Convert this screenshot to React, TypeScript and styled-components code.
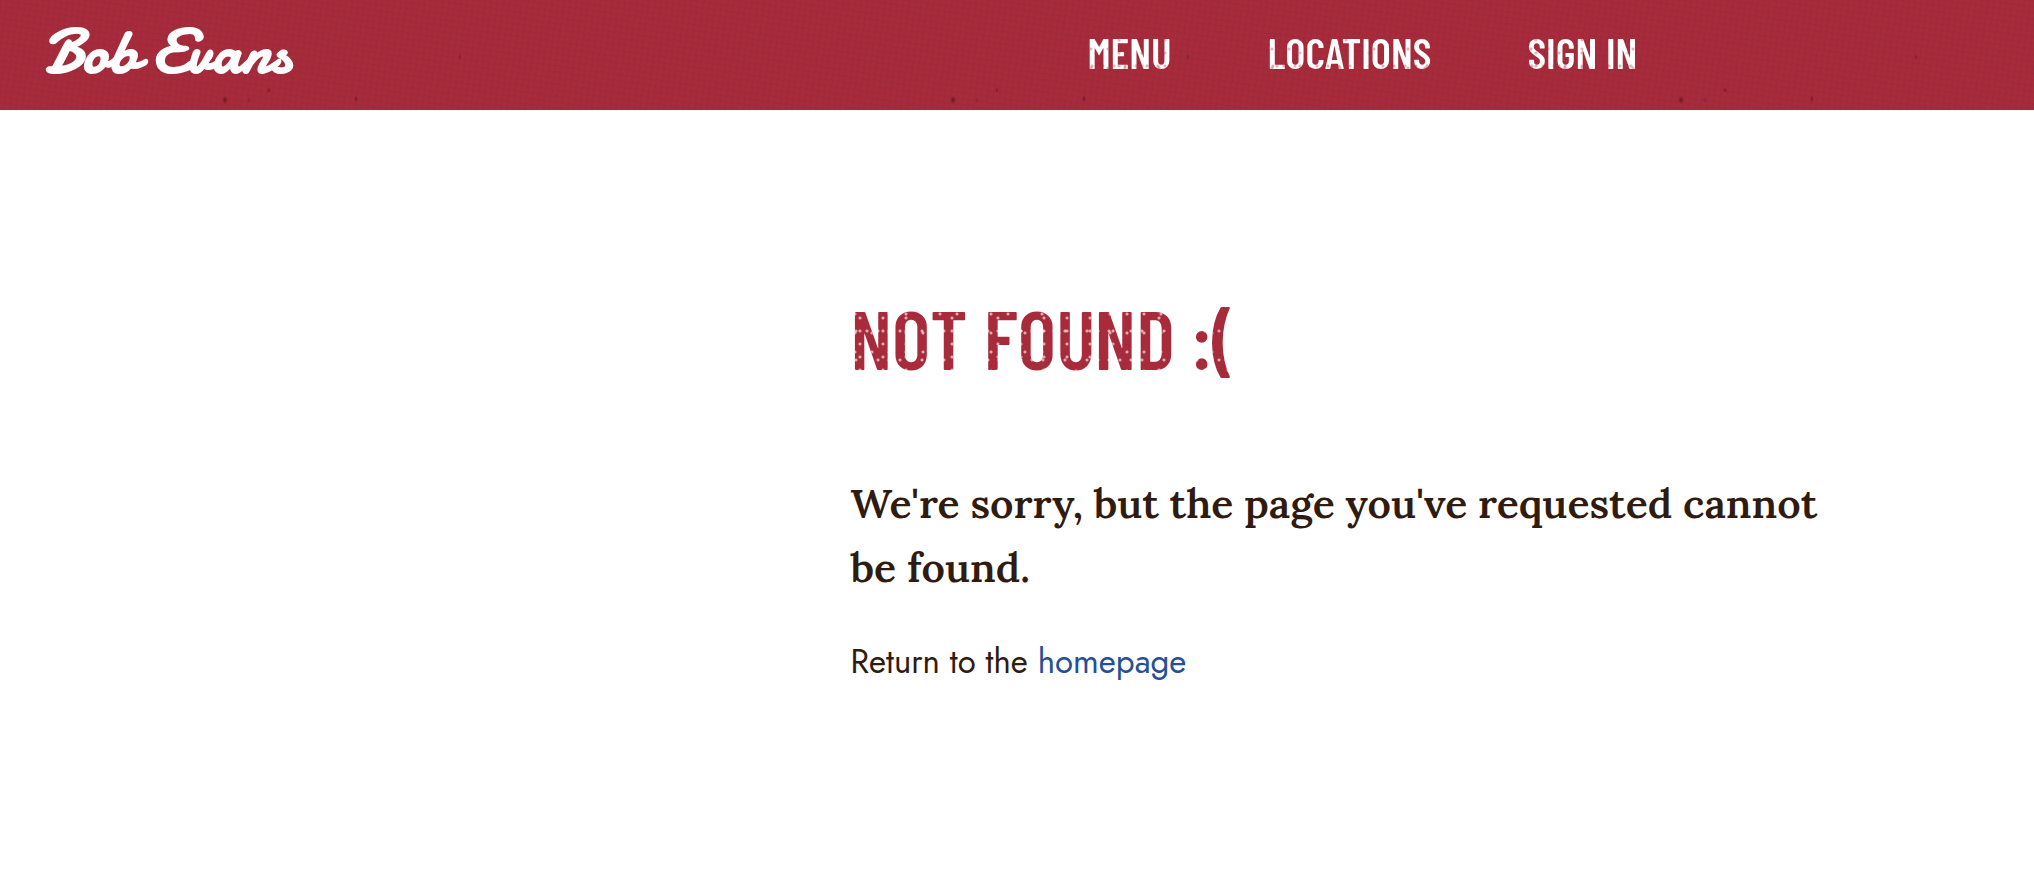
import React from 'react';
import styled, { createGlobalStyle, css } from 'styled-components';

const colors = {
  red: '#a82b3b',
  brown: '#2f1b10',
  blue: '#264f95',
  white: '#ffffff',
};

const fonts = {
  stamp: '"Barlow Condensed", "Open Sans Condensed", "Roboto Condensed", sans-serif',
  script: 'Damion, "Kaushan Script", Lato, cursive',
  serif: 'Lora, "Noto Serif", "Liberation Serif", serif',
  sans: 'Jost, Lato, sans-serif',
};

const GlobalStyle = createGlobalStyle`
  *, *::before, *::after { box-sizing: border-box; }
  body { margin: 0; background: ${colors.white}; color: ${colors.brown}; }
`;

/* Worn ink: specks in tiles of unequal size, so that the pattern does not visibly repeat. */
const wornInk = css<{ $ink: string; $speck: string }>`
  color: transparent;
  background-color: ${p => p.$ink};
  background-image:
    radial-gradient(circle at 4px 6px, ${p => p.$speck} 1px, transparent 2px),
    radial-gradient(circle at 9px 3px, ${p => p.$speck} 1px, transparent 2px),
    radial-gradient(circle at 5px 13px, ${p => p.$speck} 1px, transparent 2px);
  background-size: 17px 19px, 23px 13px, 11px 29px;
  -webkit-background-clip: text;
  background-clip: text;
`;

const Header = styled.header`
  display: flex;
  align-items: center;
  justify-content: space-between;
  min-height: 110px;
  padding: 0 19.5% 6px 44px;
  background-color: ${colors.red};
  background-image:
    radial-gradient(ellipse 3px 4px at 225px 100px, rgba(70, 15, 22, 0.7), transparent),
    radial-gradient(ellipse 2px 3px at 269px 90px, rgba(70, 15, 22, 0.5), transparent),
    radial-gradient(ellipse 2px 3px at 249px 100px, rgba(70, 15, 22, 0.3), transparent),
    radial-gradient(ellipse 2px 4px at 356px 99px, rgba(70, 15, 22, 0.5), transparent),
    radial-gradient(ellipse 2px 4px at 460px 57px, rgba(70, 15, 22, 0.3), transparent),
    repeating-linear-gradient(98deg, rgba(80, 30, 50, 0.06) 0 2px, transparent 2px 6px),
    repeating-linear-gradient(8deg, rgba(80, 30, 50, 0.06) 0 2px, transparent 2px 6px);
  background-size: 728px 110px, 728px 110px, 728px 110px, 728px 110px, 728px 110px, auto, auto;
`;

const Logo = styled.a`
  color: ${colors.white};
  font: 700 63px/72px ${fonts.script};
  text-decoration: none;
  white-space: nowrap;
`;

const Nav = styled.nav`
  display: flex;
  gap: 96px;
`;

const NavLink = styled.a<{ $ink: string; $speck: string }>`
  font: 600 43px/56px ${fonts.stamp};
  text-decoration: none;
  text-transform: uppercase;
  white-space: nowrap;
  ${wornInk}
`;

const Main = styled.main`
  display: grid;
  grid-template-columns: minmax(0, 5fr) minmax(0, 6fr) minmax(0, 1fr);
  padding: 179px 0 160px;
`;

const Message = styled.section`
  grid-column: 2;
  padding: 0 3px;
`;

const Title = styled.h1<{ $ink: string; $speck: string }>`
  width: fit-content;
  margin: 0 0 86px;
  font: 600 82px/96px ${fonts.stamp};
  text-transform: uppercase;
  ${wornInk}
`;

const Apology = styled.h2`
  margin: 0 0 39px;
  font: 600 41px/64px ${fonts.serif};
`;

const Hint = styled.p`
  margin: 0;
  font: 400 33px/48px ${fonts.sans};
`;

const TextLink = styled.a`
  color: ${colors.blue};
  text-decoration: none;
`;

const links = ['Menu', 'Locations', 'Sign In'];

export default function App() {
  return (
    <>
      <GlobalStyle />
      <Header>
        <Logo href="/">Bob Evans</Logo>
        <Nav>
          {links.map(label => (
            <NavLink
              key={label}
              href={`/${label.toLowerCase().replace(' ', '-')}`}
              $ink={colors.white}
              $speck="rgba(167, 43, 59, 0.35)"
            >
              {label}
            </NavLink>
          ))}
        </Nav>
      </Header>
      <Main>
        <Message>
          <Title $ink={colors.red} $speck="rgba(255, 255, 255, 0.6)">
            Not Found :(
          </Title>
          <Apology>We're sorry, but the page you've requested cannot be found.</Apology>
          <Hint>
            Return to the <TextLink href="/">homepage</TextLink>
          </Hint>
        </Message>
      </Main>
    </>
  );
}
